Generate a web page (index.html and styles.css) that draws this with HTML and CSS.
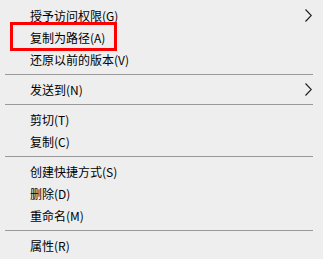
FILE: index.html
```html
<!DOCTYPE html>
<html lang="zh">
<head>
<meta charset="utf-8">
<link rel="stylesheet" href="styles.css">
</head>
<body>
<div class="menu">
  <div class="item"><span>授予访问权限(G)</span><svg class="chev" width="7" height="13" viewBox="0 0 7 13"><polyline points="0.5,0.5 6.3,6.5 0.5,12.5" fill="none" stroke="#1a1a1a" stroke-width="1.1"/></svg></div>
  <div class="item"><span>复制为路径(A)</span></div>
  <div class="item"><span>还原以前的版本(V)</span></div>
  <div class="sep"></div>
  <div class="item"><span>发送到(N)</span><svg class="chev" width="7" height="13" viewBox="0 0 7 13"><polyline points="0.5,0.5 6.3,6.5 0.5,12.5" fill="none" stroke="#1a1a1a" stroke-width="1.1"/></svg></div>
  <div class="sep"></div>
  <div class="item"><span>剪切(T)</span></div>
  <div class="item"><span>复制(C)</span></div>
  <div class="sep"></div>
  <div class="item"><span>创建快捷方式(S)</span></div>
  <div class="item"><span>删除(D)</span></div>
  <div class="item"><span>重命名(M)</span></div>
  <div class="sep"></div>
  <div class="item"><span>属性(R)</span></div>
  <div class="highlight"></div>
</div>
</body>
</html>
```

FILE: styles.css
```css
html, body {
  margin: 0;
  padding: 0;
  background: #eeeeee;
}
.menu {
  position: relative;
  width: 323px;
  height: 259px;
  box-sizing: border-box;
  padding: 4px 0 3px 0;
  display: flex;
  flex-direction: column;
  background: #eeeeee;
  font-family: "Microsoft YaHei", "Noto Sans CJK SC", "Noto Sans", sans-serif;
  font-size: 12px;
  color: #000;
}
.item {
  height: 22px;
  display: flex;
  align-items: center;
  padding-left: 30px;
  padding-right: 11px;
  white-space: nowrap;
}
.chev {
  margin-left: auto;
  display: block;
}
.sep {
  height: 1px;
  margin: 4px 10px 3px 5px;
  background: #999999;
}
.highlight {
  position: absolute;
  left: 10px;
  top: 22px;
  width: 107px;
  height: 29px;
  box-sizing: border-box;
  border: 3px solid #ff0000;
}
```
